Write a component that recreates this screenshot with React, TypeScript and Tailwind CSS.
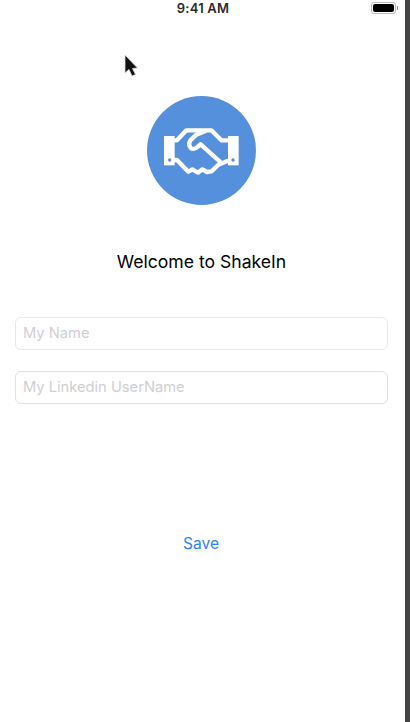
export default function App() {
  return (
    <div className="relative flex h-[722px] w-[410px] overflow-hidden bg-white font-['Inter',sans-serif]">
      <div className="flex h-full w-[405px] flex-col">
        <div className="relative flex h-[16px] items-center justify-center pl-[1px] pt-[1px] text-[13px] font-semibold leading-none tracking-[0.2px] text-[#2a2a2a]">
          9:41 AM
          <div className="absolute left-[371px] top-[2px] flex items-center">
            <div className="h-[12px] w-[25px] rounded-[3px] border border-[#bbb] p-[1px]">
              <div className="h-full w-full rounded-[2px] bg-black" />
            </div>
            <div className="ml-[1px] h-[4px] w-[1px] bg-[#999]" />
          </div>
        </div>

        <div className="mt-[80px] flex justify-center pr-[3px]">
          <div className="h-[109px] w-[109px] rounded-full bg-[#5590dd]">
            <svg viewBox="52 30 327 327" className="h-full w-full" fill="none" stroke="white" strokeWidth="13" strokeLinejoin="round" strokeLinecap="round">
              <rect x="103" y="150" width="32" height="88" fill="white" stroke="none" />
              <rect x="295" y="150" width="32" height="88" fill="white" stroke="none" />
              <path d="M135 163H142L170 133H245L275 163H295" />
              <path d="M135 222H142L176 257L188 250L205 260L218 250L232 258L246 256L266 236L295 224" />
              <path d="M226 136L200 146L182 163Q174 176 184 187Q194 192 204 182L213 175L272 228" />
              <circle cx="120" cy="222" r="5" fill="#5590dd" stroke="none" />
              <circle cx="310" cy="222" r="5" fill="#5590dd" stroke="none" />
            </svg>
          </div>
        </div>

        <h1 className="mt-[46px] pr-[2px] text-center text-[17.6px] font-normal leading-[22px] text-black">Welcome to ShakeIn</h1>

        <div className="mt-[44px] flex flex-col gap-[21px] pl-[15px] pr-[17px]">
          <div className="flex h-[33px] items-center rounded-[6px] border border-[#e8e8e8] px-[7px] text-[14.7px] text-[#cfcfd2]">My Name</div>
          <div className="flex h-[33px] items-center rounded-[6px] border border-[#e0e0e0] px-[7px] text-[14.7px] text-[#cfcfd2]">My Linkedin UserName</div>
        </div>

        <div className="mt-[130px] pr-[3px] text-center text-[15.6px] leading-[20px] text-[#2f7ff5]">Save</div>
      </div>
      <div className="h-full w-[5px] bg-[#444]" />

      <svg className="absolute left-[122px] top-[53px] h-[28px] w-[20px]" viewBox="0 0 20 28">
        <path d="M3 2L3 20L7 16.5L10 23L13.5 21.5L10.5 15.5L15.5 15Z" fill="#111" stroke="#ddd" strokeWidth="0.8" />
      </svg>
    </div>
  );
}
